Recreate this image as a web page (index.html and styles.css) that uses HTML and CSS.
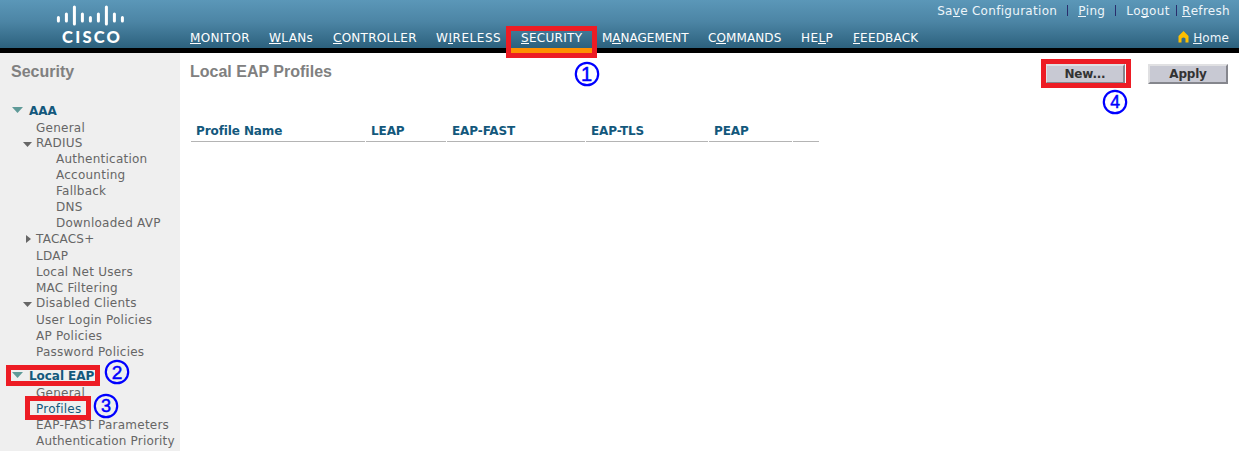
FILE: index.html
```html
<!DOCTYPE html>
<html lang="en">
<head>
<meta charset="utf-8">
<title>Local EAP Profiles</title>
<link rel="stylesheet" href="styles.css">
</head>
<body>
<header class="header">
  <svg class="logo" viewBox="0 0 70 48" width="70" height="48">
    <g stroke="#fff" stroke-width="3" stroke-linecap="round">
      <path d="M3.4 17.5V21M11.4 14V21M19.4 7V24M27.4 14V21M35.4 17.5V21M43.4 14V21M51.4 7V24M59.4 14V21M67.4 17.5V21"/>
    </g>
    <text class="logo-text" x="7" y="43" textLength="58" lengthAdjust="spacing">CISCO</text>
  </svg>
  <nav class="nav">
    <a class="monitor"><u>M</u>ONITOR</a>
    <a class="wlans"><u>W</u>LANs</a>
    <a class="controller"><u>C</u>ONTROLLER</a>
    <a class="wireless">W<u>I</u>RELESS</a>
    <a class="security"><u>S</u>ECURITY</a>
    <a class="management">M<u>A</u>NAGEMENT</a>
    <a class="commands">C<u>O</u>MMANDS</a>
    <a class="help">HE<u>L</u>P</a>
    <a class="feedback"><u>F</u>EEDBACK</a>
  </nav>
  <div class="tools">
    <div class="links">
      <a class="save">Sa<u>v</u>e Configuration</a><i class="sep"></i><a class="ping"><u>P</u>ing</a><i class="sep"></i><a class="logout">Lo<u>g</u>out</a><i class="sep tight"></i><a class="refresh"><u>R</u>efresh</a>
    </div>
    <a class="home"><svg width="11" height="12" viewBox="0 0 11 12"><path d="M5.5 0L10.5 5V11.5H7.5V7.5Q5.5 5.5 3.5 7.5V11.5H.5V5Z" fill="#fdbf00"/></svg><span><u>H</u>ome</span></a>
  </div>
</header>
<div class="body">
  <aside class="sidebar">
    <h2 class="title">Security</h2>
    <ul class="tree">
      <li class="group"><svg class="tri" width="11" height="6"><path d="M0 0H11L5.5 6Z"/></svg>AAA</li>
      <li class="short">General</li>
      <li><svg class="tri" width="9" height="5"><path d="M0 0H9L4.5 5Z"/></svg>RADIUS</li>
      <li class="sub">Authentication</li>
      <li class="sub">Accounting</li>
      <li class="sub">Fallback</li>
      <li class="sub">DNS</li>
      <li class="sub">Downloaded AVP</li>
      <li class="long"><svg class="tri right" width="5" height="8"><path d="M0 0V8L5 4Z"/></svg>TACACS+</li>
      <li>LDAP</li>
      <li>Local Net Users</li>
      <li class="short">MAC Filtering</li>
      <li class="long"><svg class="tri" width="9" height="5"><path d="M0 0H9L4.5 5Z"/></svg>Disabled Clients</li>
      <li>User Login Policies</li>
      <li>AP Policies</li>
      <li>Password Policies</li>
      <li class="group second"><svg class="tri" width="11" height="6"><path d="M0 0H11L5.5 6Z"/></svg>Local EAP</li>
      <li>General</li>
      <li class="current">Profiles</li>
      <li>EAP-FAST Parameters</li>
      <li class="priority">Authentication Priority</li>
    </ul>
  </aside>
  <main class="main">
    <div class="bar">
      <h1 class="title">Local EAP Profiles</h1>
      <div class="actions"><button>New...</button><button>Apply</button></div>
    </div>
    <div class="table">
      <span>Profile Name</span><span>LEAP</span><span>EAP-FAST</span><span>EAP-TLS</span><span>PEAP</span><span></span>
    </div>
  </main>
</div>
<div class="box box1"></div><div class="box box2"></div><div class="box box3"></div><div class="box box4"></div>
<svg class="num num1" viewBox="0 0 26 26"><circle cx="13" cy="13" r="11.2"/><text x="12.6" y="20" font-size="20">1</text></svg>
<svg class="num num2" viewBox="0 0 26 26"><circle cx="13" cy="13" r="11.2"/><text x="13" y="19.8" font-size="19">2</text></svg>
<svg class="num num3" viewBox="0 0 26 26"><circle cx="13" cy="13" r="11.2"/><text x="13" y="19.3" font-size="18">3</text></svg>
<svg class="num num4" viewBox="0 0 26 26"><circle cx="13" cy="13" r="11.2"/><text x="13" y="19.3" font-size="17.5">4</text></svg>
</body>
</html>
```
FILE: styles.css
```css
* { box-sizing: border-box; }
body {
  margin: 0; width: 1239px; height: 451px; overflow: hidden; position: relative;
  background: #fff; font: 12px/16px "DejaVu Sans", sans-serif; color: #666;
}
u { text-decoration: none; border-bottom: 1px solid currentColor; display: inline-block; height: 14px; line-height: 16px; }

.header {
  height: 53px; display: flex; color: #fff;
  background: linear-gradient(#5b97b8, #4c85a5 45%, #2c617d); border-bottom: 5px solid #000;
}
.logo { margin-left: 55px; flex: none; }
.logo-text { font: 900 16.5px Lato, sans-serif; fill: #fff; }
.nav {
  margin-left: 65px; padding-top: 30px; flex: none; display: grid;
  grid-template-columns: 79px 64px 103px 85px 81px 106px 93px 52px 66px;
}
.nav a { white-space: nowrap; }
.monitor { letter-spacing: .35px; }
.wlans { letter-spacing: .4px; }
.controller { letter-spacing: .25px; }
.wireless { letter-spacing: .55px; }
.security { position: relative; letter-spacing: .3px; }
.security::after {
  content: ""; position: absolute; left: -14px; top: 18px; width: 90px; height: 5px; background: #ff9000;
}
.commands { letter-spacing: .1px; }
.help { letter-spacing: .4px; }
.feedback { letter-spacing: .2px; }

.tools { flex: 1; display: flex; flex-direction: column; align-items: flex-end; padding: 3px 10px 0 0; color: #edf5fa; }
.links { display: flex; white-space: nowrap; letter-spacing: .3px; margin-right: -1px; }
.logout { letter-spacing: .45px; }
.sep { width: 1px; height: 11px; background: #292d6c; margin: 2px 10px 0; }
.sep.tight { margin: 2px 5px 0 6px; }
.home { display: flex; gap: 4px; margin-top: 11px; letter-spacing: .1px; }
.home svg { margin-top: 1px; }

.body { display: flex; height: 398px; }
.title { margin: 0; font: bold 16px/20px "Liberation Sans", Arial, sans-serif; color: #808080; }
.sidebar { width: 180px; background: #efefef; flex: none; }
.sidebar .title { padding: 9px 0 0 11px; }
.tree { list-style: none; margin: 21px 0 0; padding: 0; letter-spacing: .24px; white-space: nowrap; }
.tree li { display: flex; height: 16px; padding-left: 36px; }
.tree .sub { padding-left: 56px; }
.tree .short { height: 15px; }
.tree .long { height: 17px; }
.tree .group { height: 17px; padding-left: 12px; font-weight: bold; color: #13587c; letter-spacing: -.05px; }
.tree .second { margin-top: 8px; }
.tree .current { color: #13587c; }
.tree .priority { letter-spacing: .18px; }
.tri { margin: 7px 4px 0 -13px; fill: #666; flex: none; }
.tri.right { margin: 4px 5px 0 -10px; }
.group .tri { margin: 4px 6px 0 0; fill: #5f9a98; }

.main { flex: 1; padding: 9px 11px 0 11px; }
.bar { display: flex; justify-content: space-between; }
.bar .title { margin-left: -1px; }
.actions { display: flex; gap: 23px; padding-top: 2px; }
.actions button {
  width: 80px; height: 20px; padding: 0; background: #c8c9d3;
  border: 2px solid; border-color: #e0e0e2 #85868d #85868d #e0e0e2;
  font: bold 12px/16px "DejaVu Sans", sans-serif; color: #333; letter-spacing: -.2px;
}
.table {
  display: grid; grid-template-columns: 174px 80px 138px 122px 83px 26px; column-gap: 1px;
  margin-top: 39px; font-weight: bold; color: #13587c; letter-spacing: -.1px;
}
.table span { height: 19px; padding-left: 5px; border-bottom: 1px solid #b4b4b4; }

.box { position: absolute; border: 5px solid #ed1c24; }
.box1 { left: 506px; top: 26px; width: 91px; height: 32px; }
.box2 { left: 6px; top: 365px; width: 94px; height: 21px; }
.box3 { left: 25px; top: 396px; width: 66px; height: 24px; }
.box4 { left: 1041px; top: 59px; width: 90px; height: 29px; }
.num { position: absolute; width: 26px; height: 26px; }
.num circle { fill: #fff; stroke: #00f; stroke-width: 2.2; }
.num text { font-family: "Liberation Sans", Arial, sans-serif; fill: #00f; stroke: #00f; stroke-width: .5; text-anchor: middle; }
.num1 { left: 574px; top: 61px; }
.num2 { left: 104px; top: 359px; }
.num3 { left: 93px; top: 393px; }
.num4 { left: 1102px; top: 89px; }
.num2 circle, .num3 circle { fill: #efefef; }
```
